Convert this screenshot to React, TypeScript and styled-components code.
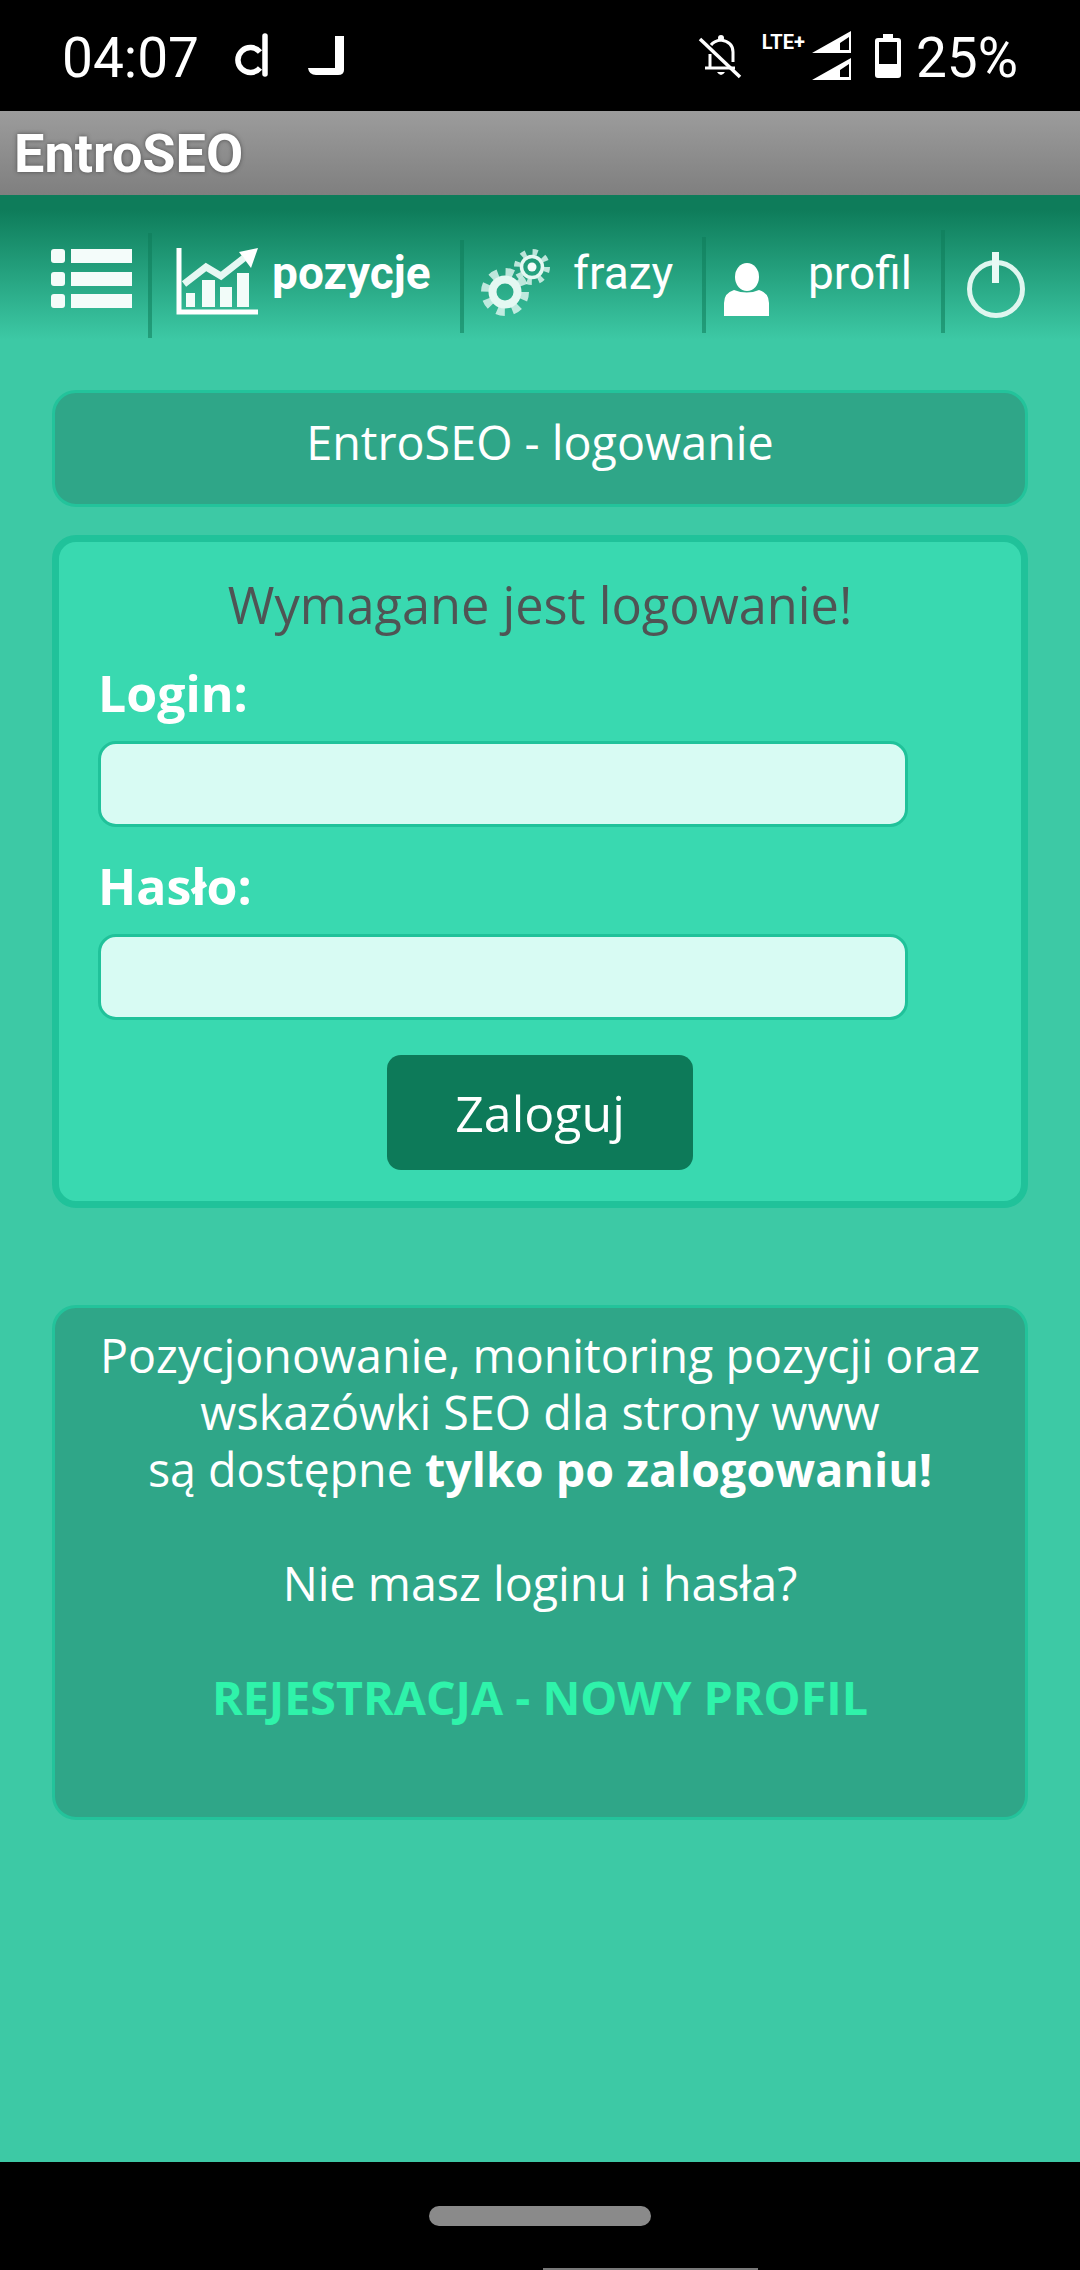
import styled, { createGlobalStyle } from "styled-components";

const GlobalStyle = createGlobalStyle`
  html, body {
    margin: 0;
    padding: 0;
    background: #000;
  }
  * {
    box-sizing: border-box;
  }
`;

const Screen = styled.div`
  width: 1080px;
  height: 2270px;
  display: flex;
  flex-direction: column;
  overflow: hidden;
  font-family: "Open Sans", sans-serif;
`;

const StatusBar = styled.div`
  height: 111px;
  flex: none;
  background: #000;
  color: #fff;
  display: flex;
  align-items: center;
  justify-content: space-between;
  padding: 0 62px;
  font-family: Roboto, sans-serif;
`;

const StatusSide = styled.div`
  display: flex;
  align-items: center;
`;

const Clock = styled.span`
  width: 168px;
  font-size: 55px;
  margin-top: 4px;
`;

const BatteryLevel = styled.span`
  font-size: 55px;
  margin: 4px 0 0 15px;
`;

const NetworkLabel = styled.span`
  font-weight: 700;
  font-size: 20px;
  line-height: 20px;
  margin: 0 7px 27px 12px;
`;

const StatusIcon = styled.svg<{ $left?: number }>`
  display: block;
  flex: none;
  margin-left: ${(p) => p.$left ?? 0}px;
`;

const TitleBar = styled.div`
  height: 84px;
  flex: none;
  background: linear-gradient(180deg, #9c9c9c 0%, #7f7f7f 100%);
  color: #fff;
  display: flex;
  align-items: center;
  padding-left: 14px;
  font-family: Roboto, sans-serif;
  font-weight: 700;
  font-size: 54px;
  text-shadow: 0 0 4px rgba(60, 60, 60, 0.8);
`;

const Content = styled.div`
  flex: 1;
  background: #3dc9a5;
  display: flex;
  flex-direction: column;
`;

const NavBar = styled.nav`
  height: 145px;
  flex: none;
  background: linear-gradient(180deg, #0e7c5a 0%, #0e7c5a 10%, #3dc9a5 100%);
  display: flex;
  align-items: flex-start;
  padding-left: 30px;
  font-family: Roboto, sans-serif;
  color: #fff;
  font-size: 46px;
`;

const NavItem = styled.div<{ $width: number }>`
  width: ${(p) => p.$width}px;
  flex: none;
  display: flex;
  align-items: flex-start;
`;

const NavDivider = styled.div<{ $top: number; $height: number }>`
  width: 4px;
  height: ${(p) => p.$height}px;
  margin-top: ${(p) => p.$top}px;
  flex: none;
  background: rgba(14, 124, 90, 0.55);
`;

const NavIcon = styled.svg<{ $left: number; $top: number }>`
  display: block;
  flex: none;
  margin-left: ${(p) => p.$left}px;
  margin-top: ${(p) => p.$top}px;
  filter: blur(0.7px);
`;

const NavLabel = styled.span<{ $active?: boolean; $left: number }>`
  margin: 52px 0 0 ${(p) => p.$left}px;
  font-weight: ${(p) => (p.$active ? 700 : 400)};
  line-height: 52px;
`;

const Panels = styled.div`
  padding: 50px 52px 0;
  display: flex;
  flex-direction: column;
`;

const HeaderPanel = styled.div`
  height: 117px;
  background: #2fa688;
  border: 3px solid #23c39b;
  border-radius: 24px;
  color: #fff;
  font-size: 46.7px;
  display: flex;
  align-items: center;
  justify-content: center;
  padding-bottom: 14px;
`;

const LoginPanel = styled.form`
  height: 673px;
  margin-top: 28px;
  background: #39d9b0;
  border: 7px solid #20c29a;
  border-radius: 24px;
  padding: 0 39px;
  display: flex;
  flex-direction: column;
`;

const LoginNotice = styled.div`
  color: #4f5454;
  font-size: 50.5px;
  line-height: 66px;
  text-align: center;
  margin: 30px 0 22px;
`;

const FieldLabel = styled.label`
  color: #fff;
  font-weight: 700;
  font-size: 50px;
  line-height: 62px;
  margin-top: 2px;
`;

const TextField = styled.input`
  width: 810px;
  height: 86px;
  margin: 17px 0 26px;
  background: #d8fbf3;
  border: 3px solid #20c29a;
  border-radius: 18px;
  outline: none;
`;

const SubmitButton = styled.button`
  width: 306px;
  height: 115px;
  margin: 9px auto 0;
  background: #0d7a59;
  border: none;
  border-radius: 14px;
  color: #fff;
  font-family: "Open Sans", sans-serif;
  font-size: 50px;
`;

const InfoPanel = styled.div`
  height: 515px;
  margin-top: 97px;
  background: #2fa688;
  border: 3px solid #23c39b;
  border-radius: 24px;
  color: #fff;
  font-size: 46.6px;
  line-height: 57px;
  text-align: center;
  padding-top: 19px;
`;

const Paragraph = styled.p`
  margin: 0 0 57px;
`;

const RegisterLink = styled.a`
  color: #2ff3aa;
  font-weight: 700;
`;

const BottomBar = styled.div`
  height: 108px;
  flex: none;
  background: #000;
  position: relative;
  display: flex;
  justify-content: center;
  padding-top: 44px;
`;

const HomePill = styled.div`
  width: 222px;
  height: 20px;
  border-radius: 10px;
  background: #8a8a8a;
`;

const PeekLine = styled.div`
  position: absolute;
  left: 543px;
  bottom: 0;
  width: 215px;
  height: 2px;
  background: #777;
`;

const NotificationGlyphs = () => (
  <StatusIcon width="120" height="60" viewBox="0 0 120 60" fill="none" stroke="#fff">
    <path d="M30 26A12.5 12.5 0 1 0 30 42" strokeWidth="5.5" />
    <path d="M35 10V48" strokeWidth="5.5" strokeLinecap="round" />
    <path d="M105 10H114V44Q114 49 108 49H86Q79 49 78 42H105Z" fill="#fff" stroke="none" />
  </StatusIcon>
);

const MutedBellIcon = () => (
  <StatusIcon width="60" height="60" viewBox="0 0 60 60" fill="none" stroke="#fff" strokeWidth="3">
    <path d="M15 42H45" />
    <path d="M20 42V28" />
    <path d="M43 36V26Q43 16 31 14Q24 15 21 19" />
    <circle cx="31" cy="12" r="3" fill="#fff" stroke="none" />
    <path d="M27 46Q31 52 35 46Z" fill="#fff" stroke="none" />
    <path d="M10 13L50 51" strokeWidth="3.5" />
  </StatusIcon>
);

const SignalIcon = () => (
  <StatusIcon width="39" height="60" viewBox="0 0 39 60" fill="#fff">
    <path d="M0 27L39 5V27ZM28 17V24H37V11Z" fillRule="evenodd" />
    <path d="M0 54L39 32V54ZM28 44V51H37V38Z" fillRule="evenodd" />
  </StatusIcon>
);

const BatteryIcon = () => (
  <StatusIcon $left={24} width="26" height="60" viewBox="0 0 26 60" fill="#fff">
    <path
      d="M8 8H18V12H23Q26 12 26 15V49Q26 52 23 52H3Q0 52 0 49V15Q0 12 3 12H8ZM4 16V38H22V16Z"
      fillRule="evenodd"
    />
  </StatusIcon>
);

const ListIcon = () => (
  <NavIcon $left={21} $top={54} width="81" height="60" viewBox="0 0 81 60" fill="#f4fcfa">
    <rect y="0" width="14" height="14" rx="3" />
    <rect x="20" y="0" width="61" height="14" />
    <rect y="23" width="14" height="14" rx="3" />
    <rect x="20" y="23" width="61" height="14" />
    <rect y="45" width="14" height="14" rx="3" />
    <rect x="20" y="45" width="61" height="14" />
  </NavIcon>
);

const ChartIcon = () => (
  <NavIcon $left={19} $top={45} width="100" height="85" viewBox="0 0 100 85">
    <path d="M8 8V72H87" fill="none" stroke="#fff" strokeWidth="5" />
    <path d="M15 67V53h9V67ZM31 67V40h13V67ZM49 67V47h12V67ZM66 67V33h12V67Z" fill="#f2fcf9" />
    <path d="M13 44L35 27L50 36L73 18" fill="none" stroke="#e6f8f3" strokeWidth="7" />
    <path d="M68 12L87 8L80 28Z" fill="#fff" />
  </NavIcon>
);

const GearsIcon = () => (
  <NavIcon $left={8} $top={45} width="90" height="85" viewBox="0 0 90 85" fill="none" stroke="#e4f8f2">
    <circle cx="33" cy="52" r="12.5" strokeWidth="8" />
    <circle cx="33" cy="52" r="20" strokeWidth="8" strokeDasharray="8 7.7" strokeOpacity="0.8" />
    <circle cx="60" cy="27" r="4.5" fill="#f4fcfa" stroke="none" />
    <circle cx="60" cy="27" r="10.5" strokeWidth="3.5" />
    <circle cx="60" cy="27" r="15" strokeWidth="6" strokeDasharray="5 6.8" strokeOpacity="0.8" />
  </NavIcon>
);

const UserIcon = () => (
  <NavIcon $left={18} $top={68} width="45" height="53" viewBox="0 0 45 53" fill="#fff">
    <ellipse cx="23" cy="14" rx="12" ry="14" />
    <path d="M0 53V40Q0 30 10 27Q23 32 35 27Q45 30 45 40V53Z" />
  </NavIcon>
);

const PowerIcon = () => (
  <NavIcon $left={21} $top={57} width="60" height="66" viewBox="0 0 60 66" fill="none" stroke="#dff6ef">
    <circle cx="30" cy="37" r="26.5" strokeWidth="5" />
    <rect x="26" y="0" width="7" height="31" fill="#e9faf5" stroke="none" />
  </NavIcon>
);

const App = () => {
  return (
    <Screen>
      <GlobalStyle />
      <StatusBar>
        <StatusSide>
          <Clock>04:07</Clock>
          <NotificationGlyphs />
        </StatusSide>
        <StatusSide>
          <MutedBellIcon />
          <NetworkLabel>LTE+</NetworkLabel>
          <SignalIcon />
          <BatteryIcon />
          <BatteryLevel>25%</BatteryLevel>
        </StatusSide>
      </StatusBar>
      <TitleBar>EntroSEO</TitleBar>
      <Content>
        <NavBar>
          <NavItem $width={118}>
            <ListIcon />
          </NavItem>
          <NavDivider $top={38} $height={105} />
          <NavItem $width={308}>
            <ChartIcon />
            <NavLabel $active $left={1}>pozycje</NavLabel>
          </NavItem>
          <NavDivider $top={45} $height={93} />
          <NavItem $width={238}>
            <GearsIcon />
            <NavLabel $left={11}>frazy</NavLabel>
          </NavItem>
          <NavDivider $top={42} $height={96} />
          <NavItem $width={235}>
            <UserIcon />
            <NavLabel $left={39}>profil</NavLabel>
          </NavItem>
          <NavDivider $top={35} $height={103} />
          <NavItem $width={100}>
            <PowerIcon />
          </NavItem>
        </NavBar>
        <Panels>
          <HeaderPanel>EntroSEO - logowanie</HeaderPanel>
          <LoginPanel>
            <LoginNotice>Wymagane jest logowanie!</LoginNotice>
            <FieldLabel>Login:</FieldLabel>
            <TextField type="text" />
            <FieldLabel>Hasło:</FieldLabel>
            <TextField type="password" />
            <SubmitButton type="button">Zaloguj</SubmitButton>
          </LoginPanel>
          <InfoPanel>
            <Paragraph>
              Pozycjonowanie, monitoring pozycji oraz
              <br />
              wskazówki SEO dla strony www
              <br />
              są dostępne <b>tylko po zalogowaniu!</b>
            </Paragraph>
            <Paragraph>Nie masz loginu i hasła?</Paragraph>
            <RegisterLink>REJESTRACJA - NOWY PROFIL</RegisterLink>
          </InfoPanel>
        </Panels>
      </Content>
      <BottomBar>
        <HomePill />
        <PeekLine />
      </BottomBar>
    </Screen>
  );
};

export default App;
